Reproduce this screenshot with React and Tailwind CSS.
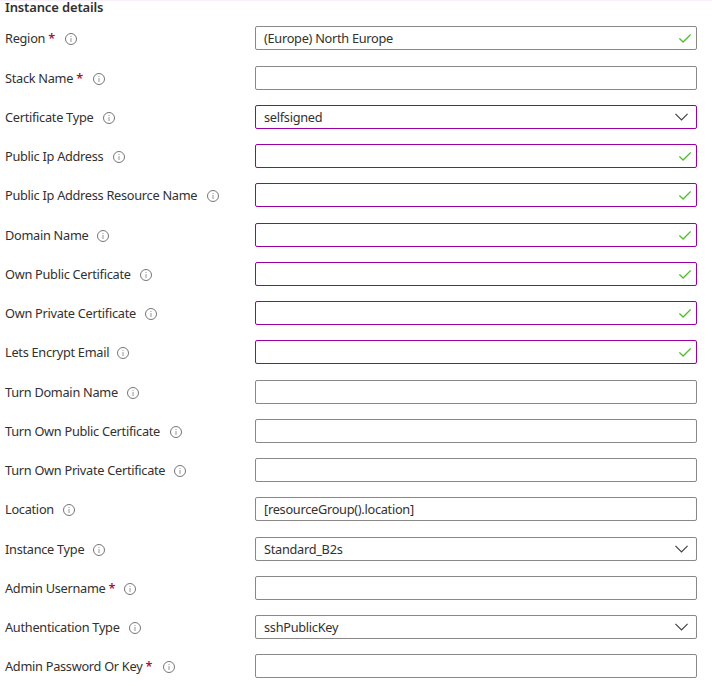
const rows = [
  { label: "Region", w: "w-[60px]", required: true, value: "(Europe) North Europe", icon: "check", space: "mb-4" },
  { label: "Stack Name", w: "w-[88px]", required: true },
  { label: "Certificate Type", w: "w-[98px]", value: "selfsigned", icon: "chevron", edited: true },
  { label: "Public Ip Address", w: "w-[108px]", icon: "check", edited: true },
  { label: "Public Ip Address Resource Name", w: "w-[202px]", icon: "check", edited: true, space: "mb-4" },
  { label: "Domain Name", w: "w-[92px]", icon: "check", edited: true },
  { label: "Own Public Certificate", w: "w-[135px]", icon: "check", edited: true },
  { label: "Own Private Certificate", w: "w-[140px]", icon: "check", edited: true },
  { label: "Lets Encrypt Email", w: "w-[112px]", icon: "check", edited: true, space: "mb-4" },
  { label: "Turn Domain Name", w: "w-[122px]" },
  { label: "Turn Own Public Certificate", w: "w-[165px]" },
  { label: "Turn Own Private Certificate", w: "w-[169px]" },
  { label: "Location", w: "w-[58px]", value: "[resourceGroup().location]", space: "mb-4" },
  { label: "Instance Type", w: "w-[88px]", value: "Standard_B2s", icon: "chevron" },
  { label: "Admin Username", w: "w-[119px]", required: true },
  { label: "Authentication Type", w: "w-[124px]", value: "sshPublicKey", icon: "chevron" },
  { label: "Admin Password Or Key", w: "w-[158px]", required: true },
];

function Info() {
  return (
    <svg width="12" height="12" viewBox="0 0 12 12" fill="none" className="mt-0.5 shrink-0">
      <circle cx="6" cy="6" r="5.5" stroke="#666" strokeWidth="0.9" />
      <path d="M6 5v4M6 3v1" stroke="#8a8a8a" strokeWidth="0.9" />
    </svg>
  );
}

function Check() {
  return (
    <svg width="12" height="9" viewBox="0 0 12 9" fill="none" className="mr-[5px]">
      <path d="M0.4 4.4L4.1 8L11.7 0.5" stroke="#4abf2a" strokeWidth="1.3" />
    </svg>
  );
}

function Chevron() {
  return (
    <svg width="13" height="8" viewBox="0 0 13 8" fill="none" className="mr-2">
      <path d="M0.4 0.9L6.5 7L12.6 0.9" stroke="#444" strokeWidth="1.2" />
    </svg>
  );
}

function Row({ row }) {
  return (
    <div className={`flex h-6 items-center ${row.space || "mb-[15px]"}`}>
      <div className="flex w-[250px] shrink-0 items-center">
        <span className={`shrink-0 whitespace-nowrap ${row.w}`}>
          {row.label}
          {row.required && <span className="ml-[3px] font-semibold text-[#b0103a]">*</span>}
        </span>
        <Info />
      </div>
      <div
        className={`flex h-6 w-[442px] items-center justify-between rounded-xs border bg-white pl-2 ${
          row.edited ? "border-[#9b00a5]" : "border-[#8a8886]"
        }`}
      >
        <span>{row.value}</span>
        {row.icon === "check" && <Check />}
        {row.icon === "chevron" && <Chevron />}
      </div>
    </div>
  );
}

export default function App() {
  return (
    <div className="h-[686px] w-[712px] border-t border-[#f9effc] bg-white pl-[5px] font-['Noto_Sans',sans-serif] text-[12.75px] leading-[18px] tracking-[-0.28px] text-[#323130]">
      <h2 className="mb-[13px] text-[13px] leading-[12px] font-semibold tracking-[-0.14px]">Instance details</h2>
      {rows.map((row) => (
        <Row key={row.label} row={row} />
      ))}
    </div>
  );
}
